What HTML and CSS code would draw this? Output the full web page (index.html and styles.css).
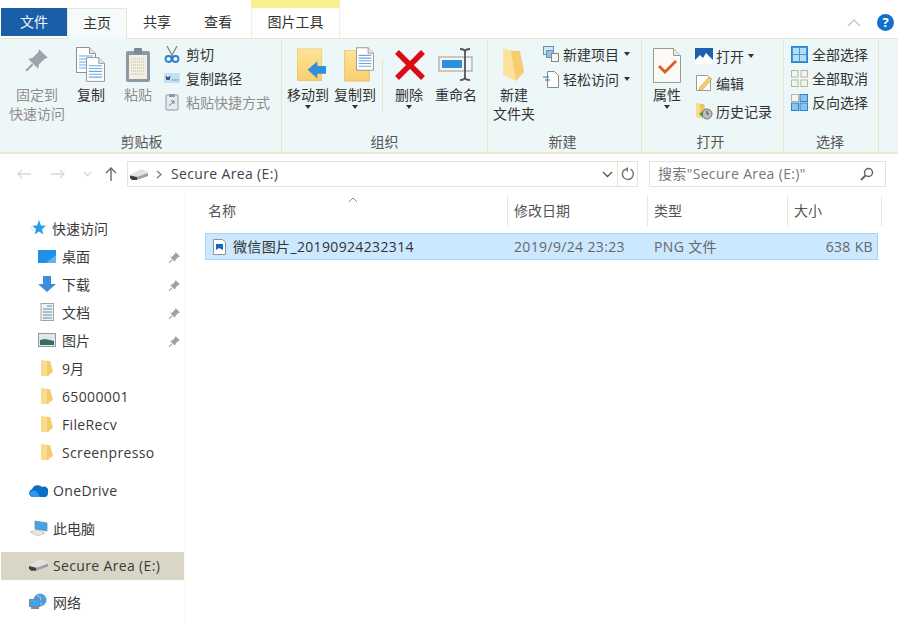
FILE: index.html
```html
<!DOCTYPE html>
<html lang="zh-CN">
<head>
<meta charset="utf-8">
<title>Secure Area (E:)</title>
<link rel="stylesheet" href="styles.css">
</head>
<body>
<svg class="defs" width="0" height="0" aria-hidden="true">
  <defs>
    <linearGradient id="fold" x1="0" y1="0" x2="0" y2="1"><stop offset="0" stop-color="#fde39a"/><stop offset="1" stop-color="#f8cf6e"/></linearGradient>
    <symbol id="pin" viewBox="0 0 24 24"><path d="M14 2l8 8-3 1-5 5-1 4-9-9 4-1 5-5z" fill="currentColor"/><path d="M8 16l-6 6" stroke="currentColor" stroke-width="2"/></symbol>
    <symbol id="page" viewBox="0 0 20 26"><path d="M.5.5h13l6 6v19H.5z" fill="#fff" stroke="#8f8f8f"/><path d="M13.5.5v6h6" fill="#e8e8e8" stroke="#8f8f8f"/><path d="M3 9h14M3 12h14M3 15h14M3 18h14M3 21h14" stroke="#6fa8dc" stroke-width="1.2"/></symbol>
    <symbol id="tallfolder" viewBox="0 0 27 35"><path d="M0 0h27v34H0z" fill="url(#fold)" stroke="#e9c163" stroke-width="1"/></symbol>
    <symbol id="smallfolder" viewBox="0 0 12 18"><path d="M0 1l8 1v15l-8 0z" fill="#fbdc8c"/><path d="M6 2h3l3 11-6 4z" fill="#f5ca6c"/></symbol>
    <symbol id="drive" viewBox="0 0 18 11"><path d="M0 6L11 0l7 3v4L5 11H2L0 9z" fill="#e2e2e2"/><path d="M0 6.500L7 8v3H2L0 9z" fill="#3f3f3f"/><path d="M7 8l11-4v3L7 11z" fill="#a0a0a0"/></symbol>
  </defs>
</svg>
<div class="window">
  <header class="tabs">
    <div class="tab tab-file">文件</div>
    <div class="tab tab-home">主页</div>
    <div class="tab tab-share">共享</div>
    <div class="tab tab-view">查看</div>
    <div class="tab tab-tools"><span class="tools-text">图片工具</span></div>
    <div class="tab-spacer"></div>
    <svg class="collapse" width="14" height="8" viewBox="0 0 14 8"><path d="M1 7l6-6 6 6" fill="none" stroke="#c8c8c0" stroke-width="1.4"/></svg>
    <div class="help">?</div>
  </header>

  <section class="ribbon">
    <div class="group g-clip">
      <div class="group-body">
        <div class="big w56 off"><div class="big-ico"><svg width="26" height="26" class="pin-big"><use href="#pin"/></svg></div><span>固定到</span><span>快速访问</span></div>
        <div class="big w52"><div class="big-ico"><svg width="30" height="36" viewBox="0 0 30 36"><use href="#page" x="0" y="0" width="20" height="26"/><use href="#page" x="10" y="10" width="19" height="25"/></svg></div><span>复制</span></div>
        <div class="big w42 off"><div class="big-ico"><svg width="26" height="36" viewBox="0 0 26 36"><rect x="1" y="4" width="24" height="31" rx="2" fill="#8d99a8"/><rect x="4" y="8" width="18" height="24" fill="#f3efe0"/><path d="M6 12h14M6 15h14M6 18h14M6 21h14M6 24h14M6 27h14" stroke="#bdb9a6" stroke-dasharray="1 1"/><rect x="9" y="1" width="8" height="6" rx="1" fill="#7d8998"/></svg></div><span>粘贴</span></div>
        <div class="smalls s-clip">
          <div class="small"><svg width="16" height="18" viewBox="0 0 16 18"><path d="M3 1l6 11M13 1L7 12" stroke="#8a8a8a" stroke-width="1.4"/><circle cx="4.5" cy="14" r="3" fill="none" stroke="#2b7fd0" stroke-width="1.8"/><circle cx="11.5" cy="14" r="3" fill="none" stroke="#2b7fd0" stroke-width="1.8"/></svg><span>剪切</span></div>
          <div class="small"><svg width="16" height="18" viewBox="0 0 16 18"><rect y="4" width="16" height="10" fill="#bfe0f7"/><path d="M2 7l1 4 1-3 1 3 1-4M8 11h1M10.500 11h1M13 11h1" fill="none" stroke="#24476b"/></svg><span>复制路径</span></div>
          <div class="small off"><svg width="16" height="18" viewBox="0 0 16 18"><rect x="2" y="2" width="12" height="15" rx="1" fill="#e6ebee" stroke="#8d99a8"/><rect x="5" y="1" width="6" height="3" fill="#8d99a8"/><path d="M5 13l5-5M7 8h3v3" stroke="#6b7a8a" fill="none"/></svg><span>粘贴快捷方式</span></div>
        </div>
      </div>
      <div class="group-label">剪贴板</div>
    </div>

    <div class="group g-org">
      <div class="group-body">
        <div class="big w48"><div class="big-ico shift-r"><svg width="31" height="36" viewBox="0 0 32 36"><use href="#tallfolder" x="1" y="1" width="26" height="34"/><path d="M12 23l10-9v5h9v8h-9v5z" fill="#2f8fd8"/></svg></div><span>移动到</span><i class="caret"></i></div>
        <div class="big w46"><div class="big-ico shift-r"><svg width="32" height="36" viewBox="0 0 32 36"><use href="#tallfolder" x="1" y="3" width="26" height="32"/><use href="#page" x="13" y="0" width="18" height="24"/></svg></div><span>复制到</span><i class="caret"></i></div>
        <div class="divider"></div>
        <div class="big w48"><div class="big-ico shift-s"><svg width="30" height="30" viewBox="0 0 30 30"><path d="M2 2l26 26M28 2L2 28" stroke="#dc0a14" stroke-width="5.500"/></svg></div><span>删除</span><i class="caret"></i></div>
        <div class="big w46"><div class="big-ico"><svg width="36" height="36" viewBox="0 0 36 36"><rect x="1" y="10" width="33" height="14" fill="#f4f4f4" stroke="#9a9a9a"/><rect x="4" y="13" width="20" height="8" fill="#2f8fd8"/><path d="M22 2c3 0 5 1 5 3v25c0 2-2 3-5 3M32 2c-3 0-5 1-5 3M32 33c-3 0-5-1-5-3" fill="none" stroke="#555" stroke-width="1.800"/></svg></div><span>重命名</span></div>
      </div>
      <div class="group-label">组织</div>
    </div>

    <div class="group g-new">
      <div class="group-body">
        <div class="big w48"><div class="big-ico"><svg width="24" height="34" viewBox="0 0 24 34"><path d="M1 1l13 2v30L1 27z" fill="#fde29a"/><path d="M9 3h9l4 21-8 9z" fill="#f6cc70"/></svg></div><span>新建</span><span>文件夹</span></div>
        <div class="smalls new-smalls">
          <div class="small"><svg width="16" height="18" viewBox="0 0 16 18"><rect x=".5" y="1.500" width="10" height="8" fill="#d5e6f5" stroke="#6a8fb0"/><rect x="3.500" y="5.500" width="7" height="7" fill="#8fc0ea" stroke="#6a8fb0"/><rect x="8.500" y="8.500" width="7" height="8" fill="#f4f4f4" stroke="#888"/></svg><span>新建项目</span><i class="caret inline"></i></div>
          <div class="small"><svg width="16" height="18" viewBox="0 0 16 18"><path d="M4.500 1.500h7l4 4v12h-11z" fill="#fff" stroke="#888"/><path d="M0 7h6M2 10h5" stroke="#3a6ea5"/></svg><span>轻松访问</span><i class="caret inline"></i></div>
        </div>
      </div>
      <div class="group-label">新建</div>
    </div>

    <div class="group g-open">
      <div class="group-body">
        <div class="big w44"><div class="big-ico"><svg width="28" height="35" viewBox="0 0 28 35"><path d="M.5.5h20l7 7v27H.5z" fill="#fbfaf6" stroke="#9a9a90"/><path d="M20.500.5v7h7" fill="#e9e9e2" stroke="#9a9a90"/><path d="M6 18l6 6 11-11" fill="none" stroke="#e4571f" stroke-width="2.800"/></svg></div><span>属性</span><i class="caret"></i></div>
        <div class="smalls open-smalls">
          <div class="small"><svg width="18" height="18" viewBox="0 0 18 18"><rect y="1" width="18" height="12" fill="#1f5fb0"/><path d="M0 13l5-5 3 3 3-5 7 7v4H0z" fill="#fff"/></svg><span>打开</span><i class="caret inline"></i></div>
          <div class="small"><svg width="18" height="18" viewBox="0 0 18 18"><path d="M1.500 1.500h11l3 3v12h-14z" fill="#fff" stroke="#999"/><path d="M5 13l9-10 3 2-9 10-4 1z" fill="#f5cf6c" stroke="#c69a35" stroke-width=".6"/></svg><span>编辑</span></div>
          <div class="small"><svg width="18" height="18" viewBox="0 0 18 18"><path d="M1 1l7 1v15l-7-2z" fill="#fbdc8c"/><path d="M5 2h4l2 8-6 5z" fill="#f1c565"/><circle cx="12" cy="12" r="5" fill="#bcbcbc" stroke="#777"/><path d="M4 12l4-3v6z" fill="#3f9b3f"/><path d="M12 9v3h2" stroke="#444" fill="none"/></svg><span>历史记录</span></div>
        </div>
      </div>
      <div class="group-label">打开</div>
    </div>

    <div class="group g-sel">
      <div class="group-body">
        <div class="smalls sel-smalls">
          <div class="small"><svg width="17" height="17" viewBox="0 0 17 17"><rect x=".5" y=".5" width="16" height="16" fill="#3e9ae0" stroke="#2a83cc"/><rect x="2" y="2" width="6" height="6" fill="#b9dcf5"/><rect x="9" y="2" width="6" height="6" fill="#b9dcf5"/><rect x="2" y="9" width="6" height="6" fill="#b9dcf5"/><rect x="9" y="9" width="6" height="6" fill="#b9dcf5"/></svg><span>全部选择</span></div>
          <div class="small"><svg width="17" height="17" viewBox="0 0 17 17" fill="#f5f5ec" stroke="#b5b5a8"><rect x=".5" y=".5" width="6.500" height="6.500"/><rect x="10" y=".5" width="6.500" height="6.500"/><rect x=".5" y="10" width="6.500" height="6.500"/><rect x="10" y="10" width="6.500" height="6.500"/></svg><span>全部取消</span></div>
          <div class="small"><svg width="17" height="17" viewBox="0 0 17 17"><rect x=".5" y=".5" width="7" height="7" fill="#f5f5ec" stroke="#b5b5a8"/><rect x="9" y=".5" width="7.500" height="7" fill="#8cc4ef" stroke="#2a83cc"/><rect x=".5" y="9" width="7" height="7.500" fill="#8cc4ef" stroke="#2a83cc"/><rect x="9" y="9" width="7.500" height="7.500" fill="#8cc4ef" stroke="#2a83cc"/></svg><span>反向选择</span></div>
        </div>
      </div>
      <div class="group-label">选择</div>
    </div>
  </section>

  <section class="addressbar">
    <div class="nav"><svg width="16" height="10" viewBox="0 0 16 10"><path d="M15 5H2M6 1L2 5l4 4" fill="none" stroke="#d4dbcf" stroke-width="1.300"/></svg></div>
    <div class="nav"><svg width="16" height="10" viewBox="0 0 16 10"><path d="M1 5h13M10 1l4 4-4 4" fill="none" stroke="#d4dbcf" stroke-width="1.300"/></svg></div>
    <div class="nav nav-small"><svg width="9" height="6" viewBox="0 0 9 6"><path d="M1 1l3.500 3.500L8 1" fill="none" stroke="#d4dbcf" stroke-width="1.300"/></svg></div>
    <div class="nav nav-small"><svg width="12" height="14" viewBox="0 0 12 14"><path d="M6 14V2M1 6l5-5 5 5" fill="none" stroke="#6b6b6b" stroke-width="1.400"/></svg></div>
    <div class="address">
      <svg class="addr-drive" width="18" height="11"><use href="#drive"/></svg>
      <svg class="addr-sep" width="6" height="9" viewBox="0 0 6 9"><path d="M1 1l4 3.500L1 8" fill="none" stroke="#777" stroke-width="1.200"/></svg>
      <span class="addr-text lat">Secure Area (E:)</span>
      <svg class="addr-down" width="11" height="7" viewBox="0 0 11 7"><path d="M1 1l4.500 4.500L10 1" fill="none" stroke="#555" stroke-width="1.300"/></svg>
      <div class="addr-refresh"><svg width="14" height="14" viewBox="0 0 14 14"><path d="M9.500 2.200A5.500 5.500 0 1 1 4 2.300" fill="none" stroke="#777" stroke-width="1.500"/><path d="M7 0v5L3.500 2.300z" fill="#777"/></svg></div>
    </div>
    <div class="search">
      <span class="search-text lat">搜索"Secure Area (E:)"</span>
      <svg width="14" height="14" viewBox="0 0 14 14"><circle cx="8.500" cy="5.500" r="4" fill="none" stroke="#666" stroke-width="1.500"/><path d="M5.500 8.500L1 13" stroke="#666" stroke-width="2"/></svg>
    </div>
  </section>

  <main class="content">
    <nav class="sidebar">
      <div class="row top"><svg class="ico16" width="16" height="16" viewBox="0 0 16 16"><path d="M9 0l2 5.500 5 .3-4 3.400 1.400 5.300L9 11.500l-4.500 3L6 9.200 2.500 5.800 7 5.500z" fill="#2b9cec"/><path d="M0 7h3M1 10h3" stroke="#bfe0f7"/></svg><span>快速访问</span></div>
      <div class="row child"><svg class="ico18" width="18" height="13" viewBox="0 0 18 13"><rect width="18" height="13" fill="#1e90ea"/><path d="M8 13l10-8v8z" fill="#5bb5f5"/></svg><span>桌面</span><svg class="pin-s" width="13" height="13"><use href="#pin"/></svg></div>
      <div class="row child"><svg class="ico18" width="18" height="16" viewBox="0 0 18 16"><path d="M5 0h8v8h5l-9 8-9-8h5z" fill="#3c8ed8"/></svg><span>下载</span><svg class="pin-s" width="13" height="13"><use href="#pin"/></svg></div>
      <div class="row child"><svg class="ico18" width="18" height="18" viewBox="0 0 18 18"><rect x="3" y="0.500" width="12.500" height="17" fill="#eef1ef" stroke="#a5a8a5"/><path d="M9 3h5M5 6h9M5 9h9M5 12h9M5 15h9" stroke="#5f8fb8"/></svg><span>文档</span><svg class="pin-s" width="13" height="13"><use href="#pin"/></svg></div>
      <div class="row child"><svg class="ico18" width="18" height="14" viewBox="0 0 18 14"><rect x=".5" y=".5" width="17" height="13" fill="#dbe8ef" stroke="#8f9aa2"/><path d="M2 7l5-1 9 2v4H2z" fill="#3f6b5a"/></svg><span>图片</span><svg class="pin-s" width="13" height="13"><use href="#pin"/></svg></div>
      <div class="row child"><svg class="ico18 folder" width="12" height="18"><use href="#smallfolder"/></svg><span>9月</span></div>
      <div class="row child"><svg class="ico18 folder" width="12" height="18"><use href="#smallfolder"/></svg><span class="lat">65000001</span></div>
      <div class="row child"><svg class="ico18 folder" width="12" height="18"><use href="#smallfolder"/></svg><span class="lat">FileRecv</span></div>
      <div class="row child"><svg class="ico18 folder" width="12" height="18"><use href="#smallfolder"/></svg><span class="lat">Screenpresso</span></div>
      <div class="row top gap-10"><svg class="ico19" width="19" height="13" viewBox="0 0 19 13"><path d="M4 13a4 4 0 0 1-1-7.800A6 6 0 0 1 13 3a4.500 4.500 0 0 1 6 6c0 2-1 4-3 4z" fill="#0f6cc4"/><path d="M1 9c2-3 5-3 7-1l3 5H4a4 4 0 0 1-3-4z" fill="#2b9cec"/></svg><span class="lat">OneDrive</span></div>
      <div class="row top gap-10"><svg class="ico19" width="19" height="17" viewBox="0 0 19 17"><path d="M6 1l12 2v8L6 9z" fill="#3ea6ec" stroke="#7a8a94" stroke-width=".8"/><path d="M1 12l7-2 8 3-7 3z" fill="#e8e8e8" stroke="#b0b0b0" stroke-width=".6"/></svg><span>此电脑</span></div>
      <div class="row top gap-9 selected"><svg class="ico19" width="19" height="12"><use href="#drive"/></svg><span class="lat">Secure Area (E:)</span></div>
      <div class="row top gap-9"><svg class="ico19" width="19" height="18" viewBox="0 0 19 18"><circle cx="11" cy="7" r="6.500" fill="#4a9fdc"/><path d="M8 2l4 3-2 4 3 3" fill="none" stroke="#9fd0ee"/><rect x="0.500" y="6.500" width="10" height="7" fill="#3ea6ec" stroke="#7a8a94"/><path d="M2 15h8" stroke="#888" stroke-width="2"/></svg><span>网络</span></div>
    </nav>
    <div class="files">
      <div class="head">
        <div class="col col-name">名称</div>
        <div class="col">修改日期</div>
        <div class="col">类型</div>
        <div class="col">大小</div>
        <svg class="sort" width="10" height="6" viewBox="0 0 10 6"><path d="M1 5l4-4 4 4" fill="none" stroke="#8a8a8a"/></svg>
      </div>
      <div class="file">
        <div class="cell cell-name"><svg width="13" height="16" viewBox="0 0 13 16"><path d="M.5.5h9l3 3v12H.5z" fill="#fff" stroke="#8a94a0"/><rect x="3" y="5" width="7" height="6" fill="#1569b8"/><path d="M3 11l3-2 4 2z" fill="#fff"/></svg><span class="lat">微信图片_20190924232314</span></div>
        <div class="cell lat">2019/9/24 23:23</div>
        <div class="cell lat">PNG 文件</div>
        <div class="cell cell-size lat">638 KB</div>
      </div>
    </div>
  </main>
</div>
</body>
</html>
```

FILE: styles.css
```css
* { box-sizing: border-box; }
html, body { margin: 0; padding: 0; background: #fff; }
body {
  width: 898px;
  height: 623px;
  overflow: hidden;
  font-family: "Open Sans", "Noto Sans CJK SC", sans-serif;
  font-size: 14px;
  color: #333;
}
.defs { display: block; height: 0; }
.window { width: 898px; height: 623px; display: flex; flex-direction: column; }
.lat { letter-spacing: .35px; }

/* tabs */
.tabs { display: flex; height: 38px; align-items: stretch; line-height: 28px; flex: none; }
.tab { text-align: center; }
.tab-file { width: 66px; margin: 8px 0 2px 1px; background: #1a5ea8; color: #f2f6fb; line-height: 27px; }
.tab-home { width: 60px; margin-top: 8px; background: #f5fbfb; border: 1px solid #ebe8cf; border-bottom: 0; color: #333; position: relative; z-index: 1; height: 31px; }
.tab-share { width: 60px; margin: 8px 0 0 0; }
.tab-view { width: 62px; margin-top: 8px; }
.tab-tools { width: 89px; margin-left: 2px; border-top: 8px solid #f6f18c; border-left: 1px solid #efefe4; border-right: 1px solid #efefe4; padding-top: 0; }
.tab-spacer { flex: 1; }
.collapse { align-self: center; margin: 8px 16px 0 0; }
.help { width: 17px; height: 17px; margin: 14px 4px 0 0; border-radius: 50%; background: #1270cc; color: #fff; font-size: 13px; font-weight: 700; line-height: 17px; text-align: center; }

/* ribbon */
.ribbon {
  display: flex;
  height: 116px;
  flex: none;
  padding: 2px 0 0 2px;
  background: #eef7f7;
  border-top: 1px solid #ebe8cf;
  border-bottom: 2px solid #ebe8cf;
}
.group { display: flex; flex-direction: column; justify-content: space-between; border-right: 1px solid #e6e3c8; flex: none; }
.g-clip { width: 280px; }
.g-org { width: 206px; }
.g-new { width: 154px; }
.g-open { width: 142px; }
.g-sel { width: 95px; }
.group-body { display: flex; align-items: flex-start; }
.g-clip .group-body { padding-left: 7px; }
.g-org .group-body, .g-new .group-body { padding-left: 2px; }
.g-open .group-body { padding-left: 3px; }
.group-label { text-align: center; line-height: 20px; color: #555; }
.g-new .group-label, .g-open .group-label { padding-right: 4px; }
.g-sel .group-label { padding-right: 2px; }

.big { display: flex; flex-direction: column; align-items: center; line-height: 19px; padding-top: 4px; color: #333; flex: none; white-space: nowrap; }
.w42 { width: 42px; } .w44 { width: 44px; } .w46 { width: 46px; } .w48 { width: 48px; } .w52 { width: 52px; } .w56 { width: 56px; }
.big-ico { height: 40px; display: flex; align-items: center; justify-content: center; }
.shift-r { padding-left: 7px; }
.shift-s { padding-left: 2px; }
.off { color: #8e8e8e; }
.pin-big { color: #9ba4af; margin-bottom: 10px; }
.caret { display: block; width: 0; height: 0; border: 3.500px solid transparent; border-top: 4px solid #333; border-bottom: 0; margin-top: 1px; }
.caret.inline { margin: 0 0 0 1px; }
.divider { width: 1px; height: 52px; background: #e6e3c8; margin: 18px 2px 0 4px; }

.smalls { display: flex; flex-direction: column; padding-top: 1px; }
.small { display: flex; align-items: center; height: 24px; gap: 3px; white-space: nowrap; }
.small svg { flex: none; }
.s-clip { padding-left: 5px; }
.s-clip .small { gap: 6px; }
.new-smalls { padding-left: 5px; margin-top: -1px; }
.new-smalls .small { height: 25px; gap: 4px; }
.open-smalls { padding-left: 6px; }
.open-smalls .small { height: 27.500px; gap: 3px; }
.sel-smalls { padding-left: 7px; }
.sel-smalls .small { gap: 4px; }

/* address */
.addressbar { display: flex; align-items: center; height: 36px; padding: 7px 12px 3px 7px; flex: none; }
.nav { width: 34px; display: flex; justify-content: center; }
.nav-small { width: 24px; }
.address { width: 511px; height: 26px; margin-left: 4px; display: flex; align-items: center; border: 1px solid #e4e4d2; padding-left: 2px; }
.addr-drive { flex: none; }
.addr-sep { margin-left: 8px; flex: none; }
.addr-text { margin-left: 9px; flex: 1; line-height: 24px; color: #444; }
.addr-down { flex: none; margin-right: 4px; }
.addr-refresh { width: 20px; height: 24px; border-left: 1px solid #e4e4d2; display: flex; align-items: center; justify-content: center; }
.search { width: 237px; height: 26px; margin-left: 11px; display: flex; align-items: center; justify-content: space-between; border: 1px solid #e4e4d2; padding: 0 11px 0 8px; color: #777; }
.search-text { line-height: 24px; }

/* content */
.content { display: flex; flex: 1; min-height: 0; }
.sidebar { width: 186px; flex: none; padding: 25px 0 0 1px; border-right: 1px solid #f3f4f3; }
.row { display: flex; align-items: center; height: 28px; width: 183px; padding-bottom: 2px; white-space: nowrap; position: relative; color: #3a3a3a; }
.row.top { padding-left: 29px; }
.row.child { padding-left: 37px; }
.ico16 { flex: none; margin-right: 6px; }
.ico18 { flex: none; }
.folder { margin-left: 3px; }
.ico19 { flex: none; width: 19px; margin: 0 5px 0 -1px; }
.row.child svg.ico18 + span { position: absolute; left: 61px; }
.pin-s { position: absolute; left: 167px; top: 8px; color: #98a2ae; }
.gap-10 { margin-top: 10px; }
.gap-9 { margin-top: 9px; }
.selected { background: #d9d6c6; }

.files { flex: 1; padding: 6px 0 0 19px; position: relative; }
.head { display: grid; grid-template-columns: 303px 140px 140px 94px; height: 30px; position: relative; color: #555; }
.col { line-height: 30px; padding-left: 6px; border-right: 1px solid #e8e8d8; }
.col-name { padding-left: 3px; }
.sort { position: absolute; left: 143px; top: 1px; }
.file { display: grid; grid-template-columns: 303px 140px 140px 90px; height: 27px; margin-top: 7px; background: #cce8ff; border: 1px solid #a5d6fb; line-height: 25px; color: #666; width: 673px; }
.cell { padding-left: 5px; white-space: nowrap; }
.cell-name { display: flex; align-items: center; gap: 7px; padding-left: 7px; color: #333; }
.cell-size { text-align: right; padding: 0 6px 0 0; }
```
